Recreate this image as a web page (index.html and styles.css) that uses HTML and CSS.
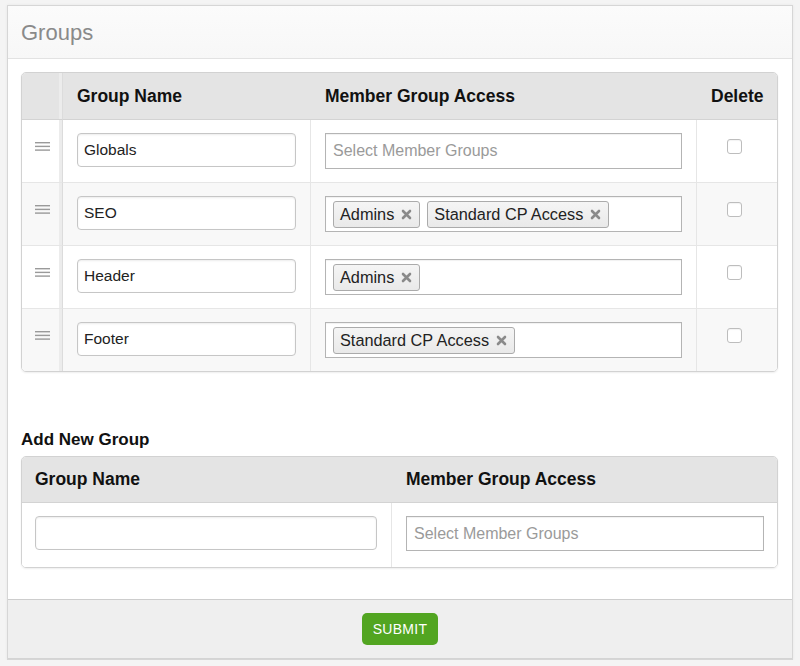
FILE: index.html
```html
<!DOCTYPE html>
<html>
<head>
<meta charset="utf-8">
<link rel="stylesheet" href="styles.css">
</head>
<body>
<div class="panel">
  <div class="panel-head">Groups</div>
  <div class="panel-body">
    <div class="grid-wrap">
      <table class="grid">
        <colgroup><col class="c-handle"><col class="c-name"><col class="c-access"><col></colgroup>
        <thead>
          <tr><th class="handle"></th><th>Group Name</th><th>Member Group Access</th><th class="center">Delete</th></tr>
        </thead>
        <tbody>
          <tr>
            <td class="handle"><svg class="grip" width="15" height="9" viewBox="0 0 15 9"><rect x="0" y="0" width="15" height="1.4" fill="#9a9a9a"/><rect x="0" y="3.7" width="15" height="1.4" fill="#9a9a9a"/><rect x="0" y="7.4" width="15" height="1.4" fill="#9a9a9a"/></svg></td>
            <td><input class="text" type="text" value="Globals"></td>
            <td><div class="select"><span class="placeholder">Select Member Groups</span></div></td>
            <td class="center"><input class="check" type="checkbox"></td>
          </tr>
          <tr class="alt">
            <td class="handle"><svg class="grip" width="15" height="9" viewBox="0 0 15 9"><rect x="0" y="0" width="15" height="1.4" fill="#9a9a9a"/><rect x="0" y="3.7" width="15" height="1.4" fill="#9a9a9a"/><rect x="0" y="7.4" width="15" height="1.4" fill="#9a9a9a"/></svg></td>
            <td><input class="text" type="text" value="SEO"></td>
            <td><div class="select">
              <span class="tag">Admins<svg class="x" width="11" height="11" viewBox="0 0 11 11"><path d="M2 2L9 9M9 2L2 9" stroke="#8a8a8a" stroke-width="2.6" stroke-linecap="round"/></svg></span>
              <span class="tag">Standard CP Access<svg class="x" width="11" height="11" viewBox="0 0 11 11"><path d="M2 2L9 9M9 2L2 9" stroke="#8a8a8a" stroke-width="2.6" stroke-linecap="round"/></svg></span>
            </div></td>
            <td class="center"><input class="check" type="checkbox"></td>
          </tr>
          <tr>
            <td class="handle"><svg class="grip" width="15" height="9" viewBox="0 0 15 9"><rect x="0" y="0" width="15" height="1.4" fill="#9a9a9a"/><rect x="0" y="3.7" width="15" height="1.4" fill="#9a9a9a"/><rect x="0" y="7.4" width="15" height="1.4" fill="#9a9a9a"/></svg></td>
            <td><input class="text" type="text" value="Header"></td>
            <td><div class="select">
              <span class="tag">Admins<svg class="x" width="11" height="11" viewBox="0 0 11 11"><path d="M2 2L9 9M9 2L2 9" stroke="#8a8a8a" stroke-width="2.6" stroke-linecap="round"/></svg></span>
            </div></td>
            <td class="center"><input class="check" type="checkbox"></td>
          </tr>
          <tr class="alt last">
            <td class="handle"><svg class="grip" width="15" height="9" viewBox="0 0 15 9"><rect x="0" y="0" width="15" height="1.4" fill="#9a9a9a"/><rect x="0" y="3.7" width="15" height="1.4" fill="#9a9a9a"/><rect x="0" y="7.4" width="15" height="1.4" fill="#9a9a9a"/></svg></td>
            <td><input class="text" type="text" value="Footer"></td>
            <td><div class="select">
              <span class="tag">Standard CP Access<svg class="x" width="11" height="11" viewBox="0 0 11 11"><path d="M2 2L9 9M9 2L2 9" stroke="#8a8a8a" stroke-width="2.6" stroke-linecap="round"/></svg></span>
            </div></td>
            <td class="center"><input class="check" type="checkbox"></td>
          </tr>
        </tbody>
      </table>
    </div>

    <h2 class="sub">Add New Group</h2>
    <div class="grid-wrap">
      <table class="grid grid2">
        <colgroup><col class="c-new"><col></colgroup>
        <thead>
          <tr><th class="pl13">Group Name</th><th>Member Group Access</th></tr>
        </thead>
        <tbody>
          <tr class="last">
            <td class="pl13"><input class="text" type="text" value=""></td>
            <td class="pr13"><div class="select s35"><span class="placeholder">Select Member Groups</span></div></td>
          </tr>
        </tbody>
      </table>
    </div>
  </div>
  <div class="panel-foot">
    <button class="submit" type="button">SUBMIT</button>
  </div>
</div>
</body>
</html>
```

FILE: styles.css
```css
html, body {
  margin: 0;
  padding: 0;
}
body {
  background: #f4f4f4;
  font-family: "Liberation Sans", Arial, sans-serif;
  color: #111;
}
.panel {
  margin: 5px 7px 0 7px;
  background: #fff;
  border: 1px solid #d6d6d6;
  box-shadow: 0 0 3px rgba(0,0,0,0.06);
}
.panel-head {
  height: 50px;
  line-height: 50px;
  padding: 2px 0 0 13px;
  font-size: 22px;
  color: #8a8a8a;
  background: linear-gradient(#fbfbfb, #f7f7f7);
  border-bottom: 1px solid #e2e2e2;
}
.panel-body {
  padding: 13px 14px 31px 13px;
}
.grid-wrap {
  border: 1px solid #d2d2d2;
  border-radius: 5px;
  overflow: hidden;
  box-shadow: 0 1px 2px rgba(0,0,0,0.07);
}
.grid {
  width: 100%;
  border-collapse: separate;
  border-spacing: 0;
  table-layout: fixed;
}
.c-handle { width: 41px; }
.c-name { width: 248px; }
.c-access { width: 386px; }
.c-new { width: 370px; }
.grid th {
  height: 47px;
  box-sizing: border-box;
  padding: 0 14px;
  text-align: left;
  font-size: 17.5px;
  font-weight: bold;
  color: #111;
  background: #e4e4e4;
  border-bottom: 1px solid #d3d3d3;
  vertical-align: middle;
}
.grid2 th { height: 46px; }
.grid th.center, .grid td.center { text-align: center; }
.grid td {
  height: 63px;
  padding: 13px 14px 0 14px;
  box-sizing: border-box;
  vertical-align: top;
  border-bottom: 1px solid #e6e6e6;
  border-right: 1px solid #e6e6e6;
  background: #fff;
}
.grid tr td:last-child { border-right: 0; }
.grid tr.last td { border-bottom: 0; height: 62px; }
.grid2 tr.last td { height: 64px; }
.grid tr.alt td { background: #f8f8f8; }
.grid th.handle {
  padding: 0;
  border-right: 1px solid #dcdcdc;
  box-shadow: inset -3px 0 0 #ececec;
  background: #e4e4e4;
}
.grid td.handle {
  padding: 22px 0 0 13px;
  border-right: 1px solid #dcdcdc;
  box-shadow: inset -3px 0 0 #ececec;
}
.grip { display: block; }
.grid .pr13 { padding-right: 13px; }
.grid .pl13 { padding-left: 13px; }
.text {
  display: block;
  width: 100%;
  height: 34px;
  box-sizing: border-box;
  margin: 0;
  padding: 0 6px;
  border: 1px solid #c6c6c6;
  border-radius: 4px;
  box-shadow: inset 0 1px 2px rgba(0,0,0,0.08);
  font-family: "Liberation Sans", Arial, sans-serif;
  font-size: 15.5px;
  color: #222;
  background: #fff;
  outline: none;
}
.select {
  display: flex;
  align-items: center;
  gap: 7px;
  height: 36px;
  box-sizing: border-box;
  padding: 0 7px;
  border: 1px solid #b4b4b4;
  box-shadow: inset 0 1px 1px rgba(0,0,0,0.06);
  background: #fff;
}
.s35 { height: 35px; }
.placeholder {
  font-size: 16px;
  color: #9a9a9a;
}
.tag {
  display: inline-flex;
  align-items: center;
  gap: 7px;
  height: 27px;
  box-sizing: border-box;
  padding: 0 7px 0 6px;
  border: 1px solid #ababab;
  border-radius: 3px;
  background: linear-gradient(#f5f5f5, #e9e9e9);
  font-size: 16.3px;
  color: #222;
}
.x { display: block; }
.check {
  -webkit-appearance: none;
  appearance: none;
  display: inline-block;
  width: 15px;
  height: 15px;
  margin: 6px 6px 0 0;
  border: 1px solid #bdbdbd;
  border-radius: 3px;
  background: #fff;
  box-shadow: inset 0 1px 1px rgba(0,0,0,0.05);
}
.sub {
  margin: 58px 0 6px 0;
  font-size: 17px;
  line-height: 20px;
  font-weight: bold;
  color: #111;
}
.panel-foot {
  border-top: 1px solid #cdcdcd;
  background: #efefef;
  padding: 13px 0 13px 0;
  display: flex;
  justify-content: center;
  border-bottom: 1px solid #d4d4d4;
}
.submit {
  width: 76px;
  height: 32px;
  border: 0;
  border-radius: 5px;
  background: #52a521;
  color: #fff;
  font-family: "Liberation Sans", Arial, sans-serif;
  font-size: 14px;
  letter-spacing: 0.3px;
  padding: 0;
}
```
